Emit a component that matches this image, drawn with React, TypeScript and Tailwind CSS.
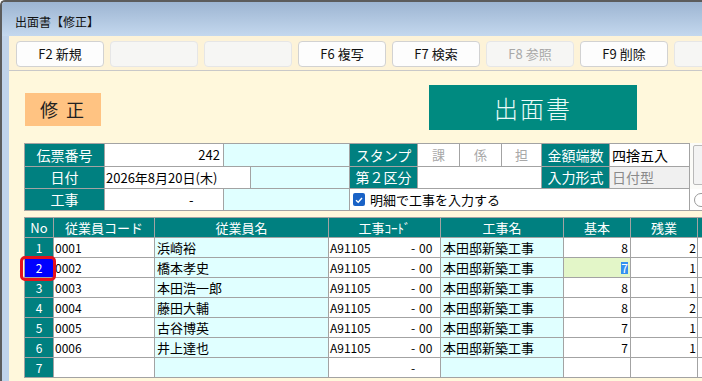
import React from "react";

const buttons: { t: string; dis?: boolean; empty?: boolean }[] = [
  { t: "F2 新規" },
  { t: "", empty: true },
  { t: "", empty: true },
  { t: "F6 複写" },
  { t: "F7 検索" },
  { t: "F8 参照", dis: true },
  { t: "F9 削除" },
  { t: "", empty: true },
];

const rows = [
  { no: "1", code: "0001", name: "浜崎裕", k: "A91105", kn: "本田邸新築工事", kihon: "8", zan: "2" },
  { no: "2", code: "0002", name: "橋本孝史", k: "A91105", kn: "本田邸新築工事", kihon: "7", zan: "1" },
  { no: "3", code: "0003", name: "本田浩一郎", k: "A91105", kn: "本田邸新築工事", kihon: "8", zan: "1" },
  { no: "4", code: "0004", name: "藤田大輔", k: "A91105", kn: "本田邸新築工事", kihon: "8", zan: "2" },
  { no: "5", code: "0005", name: "古谷博英", k: "A91105", kn: "本田邸新築工事", kihon: "7", zan: "1" },
  { no: "6", code: "0006", name: "井上達也", k: "A91105", kn: "本田邸新築工事", kihon: "7", zan: "1" },
  { no: "7", code: "", name: "", k: "", kn: "", kihon: "", zan: "" },
];

const cellBase = "h-full border-r border-b border-[#a3a3a3] flex items-center shrink-0";
const label = `${cellBase} bg-[#008080] text-white justify-center text-[14px]`;

export default function App() {
  return (
    <div className="w-[702px] h-[381px] overflow-hidden flex flex-col border-l-2 border-t-2 border-[#5c5c5c] rounded-tl-[5px] font-['Noto_Sans_CJK_JP','Noto_Sans',sans-serif] text-black">
      {/* title bar */}
      <div className="h-[34px] shrink-0 flex items-end pb-[6px] pl-[13px] bg-gradient-to-b from-[#9db5d2] to-[#c4d8ee]">
        <span className="text-[12px] leading-[16px] text-[#111]">出面書【修正】</span>
      </div>
      <div className="flex flex-1 min-h-0">
        <div className="w-[7px] shrink-0 bg-[#c0d3ea]" />
        <div className="flex-1 flex flex-col bg-[#fff8dc] min-w-0">
          {/* toolbar */}
          <div className="h-[35px] shrink-0 flex gap-[6px] pl-[7px] pt-[5px] bg-[#fdf3d8] border-b border-[#c9c9c9]">
            {buttons.map((b, i) => (
              <div
                key={i}
                className={
                  b.empty
                    ? "w-[88px] h-[26px] shrink-0 rounded-[4px] border border-[#e6e6e6] bg-[#f6f6f4]"
                    : b.dis
                    ? "w-[88px] h-[26px] shrink-0 rounded-[4px] border border-[#e6e6e6] bg-[#f6f6f4] flex items-center justify-center text-[13px] text-[#a8a8a8]"
                    : "w-[88px] h-[26px] shrink-0 rounded-[4px] border border-[#d2d2d2] bg-[#fdfdfd] flex items-center justify-center text-[13px] text-[#111]"
                }
              >
                {b.t}
              </div>
            ))}
          </div>

          {/* badge + title */}
          <div className="h-[72px] shrink-0 flex items-start pl-[16px]">
            <div className="mt-[22px] w-[76px] h-[33px] bg-[#ffc382] flex items-center justify-center text-[18px] tracking-[8px] pl-[6px] text-[#222]">
              修正
            </div>
            <div className="ml-[328px] mt-[14px] w-[208px] h-[45px] bg-[#008a80] flex items-center justify-center text-[24px] font-light tracking-[2px] text-[#eafaf8]">
              出面書
            </div>
          </div>

          {/* header form */}
          <div className="ml-[15px] flex flex-col shrink-0">
            <div className="flex">
              <div className="flex flex-col border-t border-l border-[#a3a3a3]">
                <div className="flex h-[23px]">
                  <div className={`${label} w-[80px]`}>伝票番号</div>
                  <div className={`${cellBase} w-[119px] bg-white justify-end pr-[3px] text-[13px]`}>242</div>
                  <div className={`${cellBase} w-[126px] bg-[#e0ffff]`} />
                  <div className={`${label} w-[68px]`}>スタンプ</div>
                  <div className={`${cellBase} w-[42px] bg-white justify-center text-[13px] text-[#a8a8a8]`}>課</div>
                  <div className={`${cellBase} w-[42px] bg-white justify-center text-[13px] text-[#a8a8a8]`}>係</div>
                  <div className={`${cellBase} w-[40px] bg-white justify-center text-[13px] text-[#a8a8a8]`}>担</div>
                  <div className={`${label} w-[68px]`}>金額端数</div>
                  <div className={`${cellBase} w-[80px] bg-white pl-[2px] text-[14px]`}>四捨五入</div>
                </div>
                <div className="flex h-[22px]">
                  <div className={`${label} w-[80px]`}>日付</div>
                  <div className={`${cellBase} w-[146px] bg-white pl-[1px] text-[13px]`}>2026年8月20日(木)</div>
                  <div className={`${cellBase} w-[99px] bg-[#e0ffff]`} />
                  <div className={`${label} w-[68px]`}>第２区分</div>
                  <div className={`${cellBase} w-[124px] bg-white`} />
                  <div className={`${label} w-[68px]`}>入力形式</div>
                  <div className={`${cellBase} w-[80px] bg-[#f0f0f0] pl-[2px] text-[14px] text-[#8a8a8a]`}>日付型</div>
                </div>
              </div>
              <div className="w-[20px] h-[46px] shrink-0 bg-[#fbfbf8] pt-[2px] pl-[3px]">
                <div className="h-[40px] border border-[#b9b9b9] bg-[#f3f3f3] rounded-[2px]" />
              </div>
            </div>
            <div className="flex h-[22px] border-l border-[#a3a3a3]">
              <div className={`${label} w-[80px]`}>工事</div>
              <div className={`${cellBase} w-[119px] bg-white pl-[84px] text-[13px]`}>-</div>
              <div className={`${cellBase} w-[126px] bg-[#e0ffff]`} />
              <div className={`${cellBase} w-[340px] bg-white pl-[3px] text-[13px] gap-[5px]`}>
                <span className="w-[12px] h-[13px] rounded-[2px] bg-[#1a62c6] flex items-center justify-center">
                  <svg width="10" height="10" viewBox="0 0 10 10">
                    <path d="M2 5.2 L4.2 7.3 L8 3" fill="none" stroke="white" strokeWidth="1.4" />
                  </svg>
                </span>
                <span>明細で工事を入力する</span>
              </div>
              <div className="h-full w-[20px] bg-white border-b border-[#a3a3a3] pl-[4px] flex items-center">
                <div className="w-[12px] h-[14px] border border-[#9a9a9a] rounded-l-[7px] bg-white" />
              </div>
            </div>
          </div>

          {/* table */}
          <div className="ml-[15px] mt-[6px] border-t border-l border-[#a3a3a3] flex flex-col shrink-0">
            <div className="flex h-[20px] text-white text-[13px]">
              <div className={`${cellBase} w-[29px] bg-[#008080] justify-center`}>No</div>
              <div className={`${cellBase} w-[101px] bg-[#008080] justify-center`}>従業員コード</div>
              <div className={`${cellBase} w-[174px] bg-[#008080] justify-center`}>従業員名</div>
              <div className={`${cellBase} w-[112px] bg-[#008080] justify-center`}>工事ｺｰﾄﾞ</div>
              <div className={`${cellBase} w-[123px] bg-[#008080] justify-center`}>工事名</div>
              <div className={`${cellBase} w-[67px] bg-[#008080] justify-center`}>基本</div>
              <div className={`${cellBase} w-[67px] bg-[#008080] justify-center`}>残業</div>
              <div className={`${cellBase} w-[40px] bg-[#008080]`} />
            </div>
            {rows.map((r, i) => (
              <div key={i} className="flex h-[20px] text-[12px]">
                <div
                  className={
                    i === 1
                      ? `${cellBase} w-[29px] bg-[#0000ff] text-white justify-center relative`
                      : `${cellBase} w-[29px] bg-[#008080] text-white justify-center`
                  }
                >
                  {r.no}
                  {i === 1 && (
                    <div className="absolute left-[-5px] right-[-3px] top-[-2px] bottom-[-4px] border-[3px] border-[#e5121b] rounded-[5px]" />
                  )}
                </div>
                <div className={`${cellBase} w-[101px] bg-white pl-[1px]`}>{r.code}</div>
                <div className={`${cellBase} w-[174px] bg-[#e0ffff] pl-[2px] text-[13px]`}>{r.name}</div>
                <div className={`${cellBase} w-[112px] bg-white pl-[1px]`}>
                  <span className="w-[78px] shrink-0">{r.k}</span>
                  <span className="w-[10px] text-center shrink-0">-</span>
                  <span className="ml-[1px]">{r.k ? "00" : ""}</span>
                </div>
                <div className={`${cellBase} w-[123px] bg-[#e0ffff] pl-[2px] text-[13px]`}>{r.kn}</div>
                <div
                  className={
                    i === 1
                      ? `${cellBase} w-[67px] bg-[#e3f6c8] justify-end pr-[2px]`
                      : `${cellBase} w-[67px] bg-white justify-end pr-[2px]`
                  }
                >
                  {i === 1 ? (
                    <span className="bg-[#3390f0] text-white leading-[12px] px-[0px]">{r.kihon}</span>
                  ) : (
                    r.kihon
                  )}
                </div>
                <div className={`${cellBase} w-[67px] bg-white justify-end pr-[1px]`}>{r.zan}</div>
                <div className={`${cellBase} w-[40px] bg-white`} />
              </div>
            ))}
          </div>
        </div>
      </div>
    </div>
  );
}
